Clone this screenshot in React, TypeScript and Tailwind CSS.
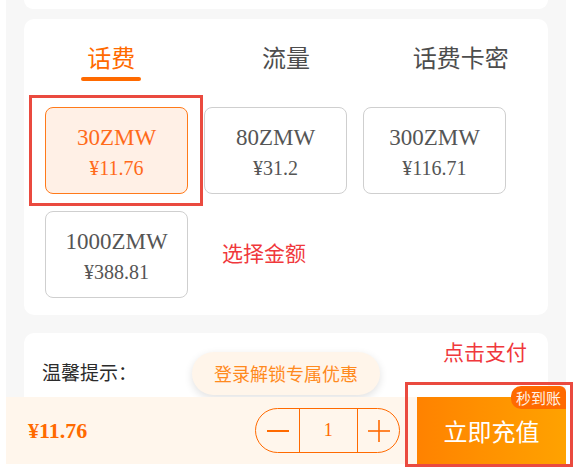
import { useState } from 'react';

const cjk = "font-['Noto_Sans_CJK_SC',sans-serif]";
const serif = "font-['Liberation_Serif','Noto_Sans_CJK_SC',serif]";

type Option = { name: string; price: string };

const options: Option[] = [
  { name: '30ZMW', price: '¥11.76' },
  { name: '80ZMW', price: '¥31.2' },
  { name: '300ZMW', price: '¥116.71' },
  { name: '1000ZMW', price: '¥388.81' },
];

const tabs = ['话费', '流量', '话费卡密'];

export default function App() {
  const [active, setActive] = useState(0);
  const [selected, setSelected] = useState(0);
  const [count, setCount] = useState(1);

  return (
    <div className="relative h-[470px] w-[574px] overflow-hidden bg-white">
      <div className="relative ml-[6px] h-[464px] w-[560px] overflow-hidden bg-[#f7f7f7] px-[18px]">
        <div className="h-[9px] rounded-b-[10px] bg-white" />

        <div className="relative mt-[10px] rounded-[10px] bg-white pb-[17px] pt-[24px]">
          <div className="flex">
            {tabs.map((tab, i) => (
              <button
                key={tab}
                type="button"
                onClick={() => setActive(i)}
                className={`flex flex-1 flex-col items-center ${cjk}`}
              >
                <span
                  className={`text-[24px] leading-[28px] ${
                    active === i ? 'text-[#ff6a00]' : 'text-[#4d4d4d]'
                  }`}
                >
                  {tab}
                </span>
                <span
                  className={`mt-[6px] h-[4px] w-[60px] rounded-full ${
                    active === i ? 'bg-[#ff6a00]' : 'bg-transparent'
                  }`}
                />
              </button>
            ))}
          </div>

          <div className="mt-[26px] grid grid-cols-[143px_143px_143px] gap-x-[16px] gap-y-[17px] pl-[21px]">
            {options.map((opt, i) => (
              <button
                key={opt.name}
                type="button"
                onClick={() => setSelected(i)}
                className={`flex h-[87px] flex-col items-center rounded-[8px] border pt-[15px] ${serif} ${
                  selected === i
                    ? 'border-[#ff7a1a] bg-[#fff0e6] text-[#ff6a1a]'
                    : 'border-[#cfcfcf] bg-white text-[#555]'
                }`}
              >
                <span className="text-[23px] leading-[30px]">{opt.name}</span>
                <span className="text-[20px] leading-[30px]">{opt.price}</span>
              </button>
            ))}
          </div>

          <span className={`absolute left-[198px] top-[219px] text-[21px] leading-[28px] text-[#f0383c] ${cjk}`}>
            选择金额
          </span>
          <div className="pointer-events-none absolute left-[5px] top-[76px] h-[111px] w-[174px] border-[3px] border-[#ea4a3f]" />
        </div>

        <div className="relative mt-[18px] h-[200px] rounded-[10px] bg-white px-[18px] pt-[25px]">
          <p className={`text-[19px] leading-[28px] text-[#2b2b2b] ${cjk}`}>温馨提示：</p>
          <span className={`absolute left-[419px] top-[4px] text-[21px] leading-[28px] text-[#f0383c] ${cjk}`}>
            点击支付
          </span>
        </div>

        <div
          className={`absolute left-[186px] top-[352px] flex h-[43px] items-center rounded-full bg-[#fff5ea] px-[22px] text-[18px] text-[#ff8a1e] shadow-[0_3px_8px_rgba(0,0,0,0.12)] ${cjk}`}
        >
          登录解锁专属优惠
        </div>

        <div className="absolute bottom-0 left-0 flex h-[67px] w-[560px] items-center bg-[#fff6ec] pl-[22px]">
          <span className={`text-[22px] font-bold text-[#ff6a00] ${serif}`}>¥11.76</span>

          <div className="ml-[168px] flex h-[45px] w-[145px] items-stretch rounded-full border border-[#ff6a00]">
            <button
              type="button"
              onClick={() => setCount(Math.max(1, count - 1))}
              className="flex w-[43px] items-center justify-center"
            >
              <svg width="22" height="22" viewBox="0 0 22 22">
                <line x1="0" y1="11" x2="22" y2="11" stroke="#ff6a00" strokeWidth="2" />
              </svg>
            </button>
            <span className={`flex w-[60px] items-center justify-center border-x border-[#ff6a00] text-[18px] text-[#ff6a00] ${serif}`}>
              {count}
            </span>
            <button
              type="button"
              onClick={() => setCount(count + 1)}
              className="flex w-[42px] items-center justify-center"
            >
              <svg width="22" height="22" viewBox="0 0 22 22">
                <line x1="0" y1="11" x2="22" y2="11" stroke="#ff6a00" strokeWidth="1.6" />
                <line x1="11" y1="0" x2="11" y2="22" stroke="#ff6a00" strokeWidth="1.6" />
              </svg>
            </button>
          </div>

          <button
            type="button"
            className={`relative ml-auto flex h-[67px] w-[149px] items-center justify-center bg-gradient-to-r from-[#ff8200] to-[#ffa200] text-[24px] text-white ${cjk}`}
          >
            立即充值
            <span className="absolute right-0 top-[-11px] flex h-[23px] w-[55px] items-center justify-center rounded-l-[10px] rounded-tr-[6px] bg-[#ff6a00] text-[15px] leading-none text-[#fff3e6]">
              秒到账
            </span>
          </button>
        </div>
      </div>

      <div className="pointer-events-none absolute left-[405px] top-[382px] h-[85px] w-[168px] border-[3px] border-[#ea4a3f]" />
    </div>
  );
}
